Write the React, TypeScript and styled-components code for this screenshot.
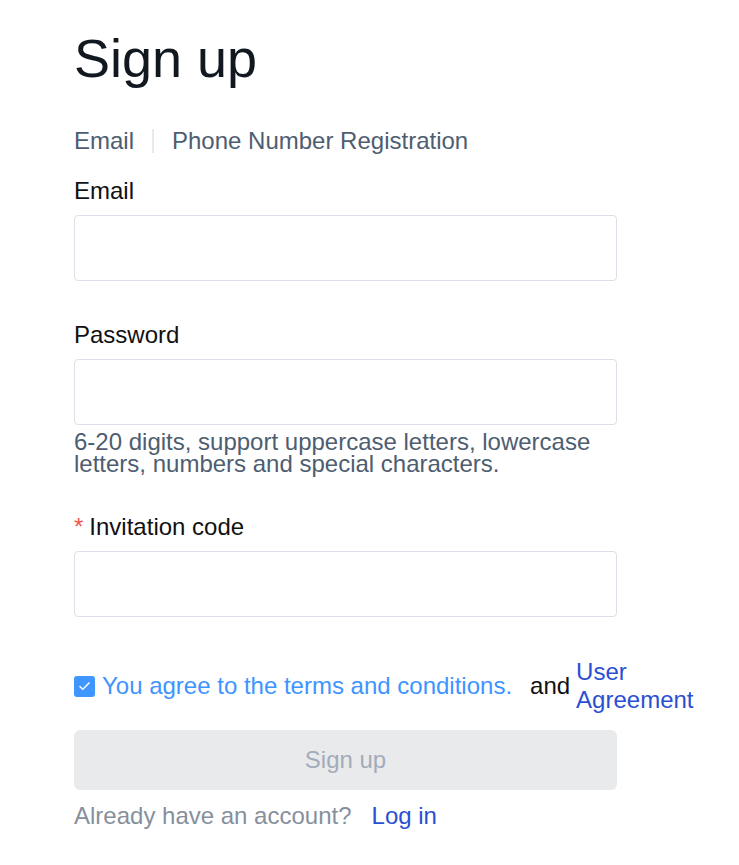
import React, { useState } from 'react';
import styled, { createGlobalStyle } from 'styled-components';

const GlobalStyle = createGlobalStyle`
  body {
    margin: 0;
    background: #ffffff;
    font-family: 'Liberation Sans', Arial, sans-serif;
  }
`;

const Page = styled.div`
  padding: 26px 0 30px 74px;
`;

const Form = styled.form`
  width: 543px;
  display: flex;
  flex-direction: column;
`;

const Title = styled.h1`
  margin: 0;
  font-size: 54px;
  line-height: 64px;
  font-weight: 400;
  color: #111820;
`;

const Tabs = styled.div`
  display: flex;
  align-items: center;
  margin-top: 36px;
  height: 30px;
`;

const Tab = styled.span`
  font-size: 24px;
  color: #4e5d70;
  cursor: pointer;
`;

const TabDivider = styled.span`
  width: 2px;
  height: 24px;
  background: #e8e9ee;
  margin: 0 18px;
`;

const Field = styled.div<{ $gap?: number }>`
  display: flex;
  flex-direction: column;
  margin-top: ${(p) => p.$gap ?? 0}px;
`;

const Label = styled.label`
  font-size: 24px;
  line-height: 28px;
  color: #111111;
  margin-bottom: 10px;
`;

const Required = styled.span`
  color: #f5544b;
  margin-right: 6px;
`;

const Input = styled.input`
  box-sizing: border-box;
  width: 100%;
  height: 66px;
  border: 1px solid #dcdfe8;
  border-radius: 4px;
  padding: 0 14px;
  font-size: 22px;
  font-family: inherit;
  outline: none;
`;

const Hint = styled.div`
  margin-top: 6px;
  font-size: 24px;
  line-height: 22px;
  color: #4e5d70;
`;

const AgreeRow = styled.div`
  display: flex;
  align-items: center;
  margin-top: 41px;
  white-space: nowrap;
`;

const Check = styled.span<{ $on: boolean }>`
  width: 21px;
  height: 21px;
  border-radius: 3px;
  background: ${(p) => (p.$on ? '#4096ff' : '#ffffff')};
  border: ${(p) => (p.$on ? 'none' : '1px solid #dcdfe8')};
  display: flex;
  align-items: center;
  justify-content: center;
  margin-right: 7px;
  flex-shrink: 0;
  cursor: pointer;
`;

const AgreeText = styled.span`
  font-size: 24px;
  color: #3e94ff;
`;

const And = styled.span`
  font-size: 24px;
  color: #111111;
  margin-left: 18px;
`;

const AgreementLink = styled.a`
  font-size: 24px;
  line-height: 28px;
  color: #2a4fd2;
  white-space: normal;
  width: min-content;
  margin-left: 6px;
  text-decoration: none;
  cursor: pointer;
`;

const SubmitButton = styled.button`
  margin-top: 16px;
  height: 60px;
  border: none;
  border-radius: 6px;
  background: #e9eaec;
  color: #a3acb9;
  font-size: 24px;
  font-family: inherit;
  cursor: not-allowed;
`;

const Footer = styled.div`
  margin-top: 12px;
  font-size: 24px;
  line-height: 28px;
  color: #86909c;
`;

const LoginLink = styled.a`
  color: #2a4fd2;
  margin-left: 20px;
  text-decoration: none;
  cursor: pointer;
`;

export default function App() {
  const [agreed, setAgreed] = useState(true);

  return (
    <Page>
      <GlobalStyle />
      <Form onSubmit={(e) => e.preventDefault()}>
        <Title>Sign up</Title>

        <Tabs>
          <Tab>Email</Tab>
          <TabDivider />
          <Tab>Phone Number Registration</Tab>
        </Tabs>

        <Field $gap={21}>
          <Label>Email</Label>
          <Input type='email' />
        </Field>

        <Field $gap={40}>
          <Label>Password</Label>
          <Input type='password' />
          <Hint>6-20 digits, support uppercase letters, lowercase letters, numbers and special characters.</Hint>
        </Field>

        <Field $gap={38}>
          <Label>
            <Required>*</Required>
            Invitation code
          </Label>
          <Input type='text' />
        </Field>

        <AgreeRow>
          <Check $on={agreed} onClick={() => setAgreed((v) => !v)}>
            {agreed && (
              <svg width='13' height='10' viewBox='0 0 13 10'>
                <path d='M1.5 5.2 L4.8 8.3 L11.5 1.5' fill='none' stroke='#ffffff' strokeWidth='1.4' />
              </svg>
            )}
          </Check>
          <AgreeText>You agree to the terms and conditions.</AgreeText>
          <And>and</And>
          <AgreementLink>User Agreement</AgreementLink>
        </AgreeRow>

        <SubmitButton type='submit' disabled>
          Sign up
        </SubmitButton>

        <Footer>
          Already have an account?
          <LoginLink>Log in</LoginLink>
        </Footer>
      </Form>
    </Page>
  );
}
